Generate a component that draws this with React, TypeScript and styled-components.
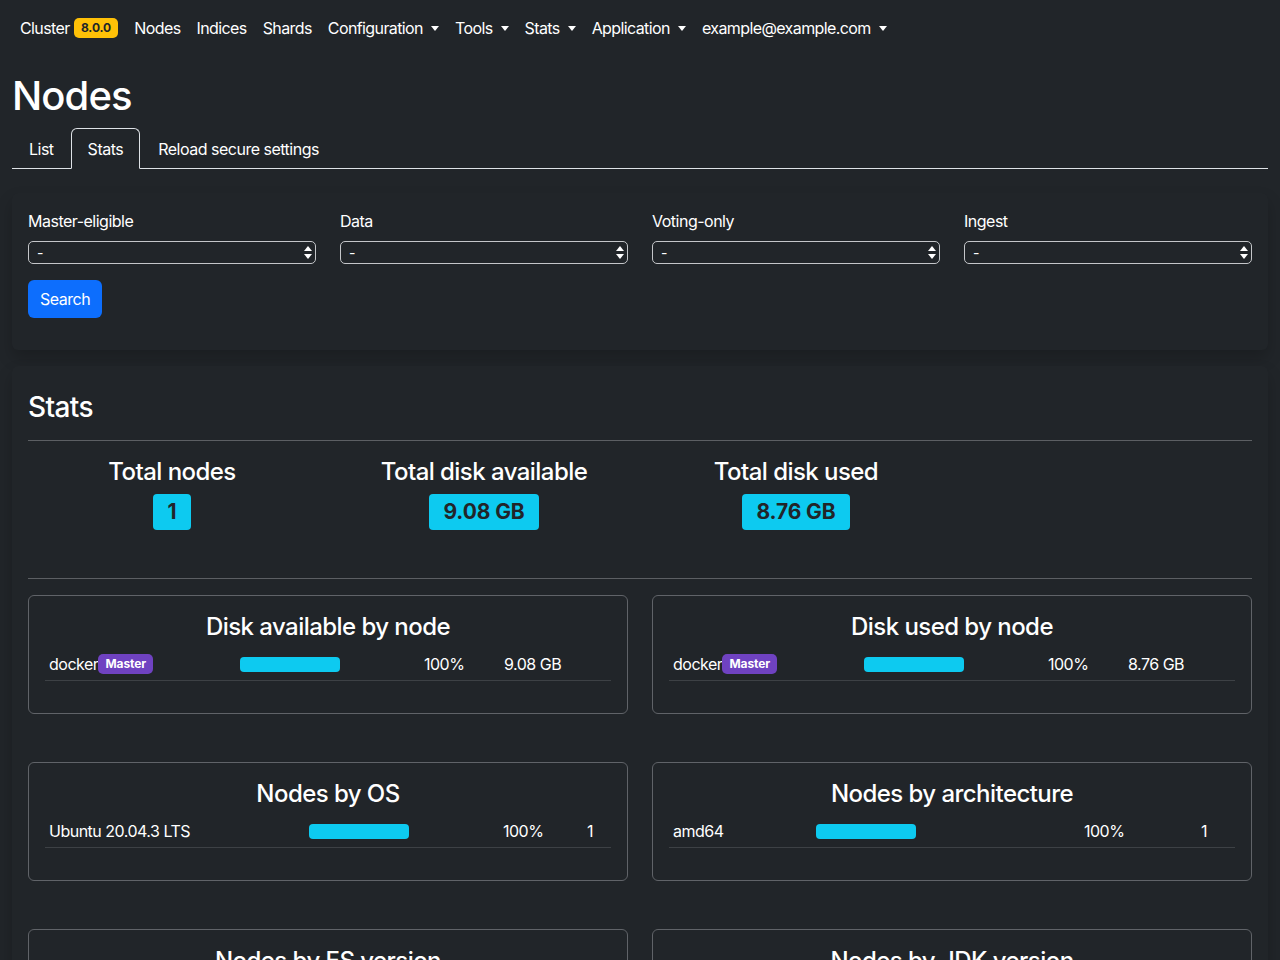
import React from "react";
import styled, { createGlobalStyle } from "styled-components";

const GlobalStyle = createGlobalStyle`
  * { box-sizing: border-box; }
  html, body {
    margin: 0;
    background: #212529;
    color: #dee2e6;
    font-family: Inter, "Noto Sans", "Liberation Sans", sans-serif;
    font-size: 16px;
    line-height: 1.5;
  }
`;

const Navbar = styled.nav`
  height: 56px;
  display: flex;
  align-items: center;
  padding: 0 20px;
  background: #212529;
  color: #fff;
  gap: 16px;
  letter-spacing: -0.6px;
`;

const Brand = styled.div`
  display: flex;
  align-items: center;
  gap: 4px;
  color: #fff;
`;

const Badge = styled.span<{ $bg: string; $fg?: string; $size?: number }>`
  display: inline-block;
  background: ${({ $bg }) => $bg};
  color: ${({ $fg }) => $fg || "#fff"};
  font-size: ${({ $size }) => $size || 12}px;
  font-weight: 700;
  line-height: 1;
  padding: ${({ $size }) => (($size || 12) > 14 ? "0.35em 0.7em" : "0.35em 0.6em")};
  border-radius: ${({ $size }) => (($size || 12) > 14 ? 4 : 5)}px;
  letter-spacing: -0.1px;
`;

const NavLink = styled.span`
  display: inline-flex;
  align-items: center;
  color: #fff;
`;

const Caret = styled.span`
  display: inline-block;
  margin-left: 8px;
  border-top: 5px solid #fff;
  border-left: 4.5px solid transparent;
  border-right: 4.5px solid transparent;
`;

const Main = styled.main`
  padding: 16px 12px 0;
`;

const PageTitle = styled.h1`
  margin: 0 0 8px;
  font-size: 40px;
  line-height: 48px;
  font-weight: 500;
  color: #fff;
  letter-spacing: -0.9px;
`;

const Tabs = styled.div`
  display: flex;
  border-bottom: 1px solid #dee2e6;
  height: 41px;
`;

const Tab = styled.div<{ $active?: boolean }>`
  padding: 8px 16px;
  line-height: 24px;
  height: 41px;
  color: #fff;
  border: 1px solid ${({ $active }) => ($active ? "#dee2e6" : "transparent")};
  border-bottom: 1px solid ${({ $active }) => ($active ? "#212529" : "transparent")};
  border-top-left-radius: 6px;
  border-top-right-radius: 6px;
  background: ${({ $active }) => ($active ? "#212529" : "transparent")};
  margin-right: ${({ $active }) => ($active ? "1px" : "0")};
  letter-spacing: -0.5px;
`;

const Card = styled.section<{ $top: number }>`
  margin-top: ${({ $top }) => $top}px;
  padding: 16px;
  border-radius: 6px;
  background: #212529;
  box-shadow: 0 0.5rem 1rem rgba(0, 0, 0, 0.2);
`;

const FilterGrid = styled.div`
  display: grid;
  grid-template-columns: repeat(4, 1fr);
  column-gap: 24px;
`;

const Field = styled.div`
  display: flex;
  flex-direction: column;
`;

const Label = styled.label`
  display: block;
  height: 24px;
  line-height: 24px;
  margin-bottom: 8px;
  color: #fff;
  letter-spacing: -0.5px;
`;

const SelectWrap = styled.div`
  position: relative;
  height: 23px;
`;

const Select = styled.select`
  appearance: none;
  display: block;
  width: 100%;
  height: 23px;
  background: #212529;
  color: #fff;
  border: 1px solid #c4c6c9;
  border-radius: 5px;
  padding: 0 8px;
  font-family: inherit;
  font-size: 14px;
`;

const SelectArrows = styled.svg`
  position: absolute;
  right: 4px;
  top: 5px;
  pointer-events: none;
`;

const SearchButton = styled.button`
  display: block;
  margin: 16px 0 16px;
  height: 38px;
  padding: 0 12px;
  background: #0d6efd;
  color: #fff;
  border: none;
  border-radius: 6px;
  font-family: inherit;
  font-size: 16px;
  letter-spacing: -0.5px;
`;

const SectionTitle = styled.h3`
  margin: 0 0 15px;
  padding-top: 8px;
  font-size: 28px;
  line-height: 34px;
  font-weight: 500;
  color: #fff;
  letter-spacing: -0.6px;
`;

const Rule = styled.hr`
  margin: 16px 0;
  border: none;
  border-top: 1px solid #5c5f63;
`;

const StatGrid = styled.div`
  display: grid;
  grid-template-columns: repeat(4, 1fr);
  margin: 0 -12px;
`;

const Stat = styled.div`
  display: flex;
  flex-direction: column;
  align-items: center;
  height: 105px;
`;

const StatLabel = styled.h4`
  margin: 0 0 8px;
  font-size: 24px;
  line-height: 29px;
  font-weight: 500;
  color: #fff;
  letter-spacing: -0.55px;
`;

const ChartGrid = styled.div`
  display: grid;
  grid-template-columns: 1fr 1fr;
  column-gap: 24px;
  row-gap: 48px;
`;

const ChartCard = styled.div`
  border: 1px solid #606368;
  border-radius: 6px;
  padding: 16px;
`;

const ChartTitle = styled.h4`
  margin: 0 0 7px;
  text-align: center;
  font-size: 24px;
  line-height: 29px;
  font-weight: 500;
  color: #fff;
  letter-spacing: -0.55px;
`;

const Table = styled.div`
  margin-bottom: 16px;
`;

const Row = styled.div<{ $cols: string }>`
  display: grid;
  grid-template-columns: ${({ $cols }) => $cols};
  align-items: center;
  border-bottom: 1px solid #3d4145;
  height: 33px;
`;

const Cell = styled.div`
  padding: 0 4px;
  display: flex;
  align-items: center;
  color: #fff;
  letter-spacing: -0.5px;
  white-space: nowrap;
`;

const Bar = styled.div`
  height: 15px;
  background: #0dcaf0;
  border-radius: 4px;
`;

type ChartRow = { name: string; master?: boolean; pct: number; value: string };
type Chart = { title: string; cols: string; rows: ChartRow[] };

const charts: Chart[] = [
  {
    title: "Disk available by node",
    cols: "191px 184px 80px 1fr",
    rows: [{ name: "docker", master: true, pct: 100, value: "9.08 GB" }],
  },
  {
    title: "Disk used by node",
    cols: "191px 184px 80px 1fr",
    rows: [{ name: "docker", master: true, pct: 100, value: "8.76 GB" }],
  },
  {
    title: "Nodes by OS",
    cols: "260px 194px 84px 1fr",
    rows: [{ name: "Ubuntu 20.04.3 LTS", pct: 100, value: "1" }],
  },
  {
    title: "Nodes by architecture",
    cols: "143px 268px 117px 1fr",
    rows: [{ name: "amd64", pct: 100, value: "1" }],
  },
  {
    title: "Nodes by ES version",
    cols: "200px 200px 90px 1fr",
    rows: [{ name: "8.0.0", pct: 100, value: "1" }],
  },
  {
    title: "Nodes by JDK version",
    cols: "200px 200px 90px 1fr",
    rows: [{ name: "17.0.1", pct: 100, value: "1" }],
  },
];

const stats = [
  { label: "Total nodes", value: "1" },
  { label: "Total disk available", value: "9.08 GB" },
  { label: "Total disk used", value: "8.76 GB" },
];

const filters = ["Master-eligible", "Data", "Voting-only", "Ingest"];

const navItems: { label: string; menu?: boolean }[] = [
  { label: "Nodes" },
  { label: "Indices" },
  { label: "Shards" },
  { label: "Configuration", menu: true },
  { label: "Tools", menu: true },
  { label: "Stats", menu: true },
  { label: "Application", menu: true },
  { label: "example@example.com", menu: true },
];

export default function App() {
  return (
    <>
      <GlobalStyle />
      <Navbar>
        <Brand>
          Cluster <Badge $bg="#ffc107" $fg="#212529">8.0.0</Badge>
        </Brand>
        {navItems.map((item) => (
          <NavLink key={item.label}>
            {item.label}
            {item.menu && <Caret />}
          </NavLink>
        ))}
      </Navbar>
      <Main>
        <PageTitle>Nodes</PageTitle>
        <Tabs>
          <Tab>List</Tab>
          <Tab $active>Stats</Tab>
          <Tab>Reload secure settings</Tab>
        </Tabs>

        <Card $top={24}>
          <FilterGrid>
            {filters.map((f) => (
              <Field key={f}>
                <Label>{f}</Label>
                <SelectWrap>
                  <Select defaultValue="-">
                    <option>-</option>
                  </Select>
                  <SelectArrows width="8" height="13" viewBox="0 0 8 13">
                    <path d="M4 0 L8 5 L0 5 Z" fill="#fff" />
                    <path d="M0 8 L8 8 L4 13 Z" fill="#fff" />
                  </SelectArrows>
                </SelectWrap>
              </Field>
            ))}
          </FilterGrid>
          <SearchButton>Search</SearchButton>
        </Card>

        <Card $top={16}>
          <SectionTitle>Stats</SectionTitle>
          <Rule />
          <StatGrid>
            {stats.map((s) => (
              <Stat key={s.label}>
                <StatLabel>{s.label}</StatLabel>
                <Badge $bg="#0dcaf0" $fg="#212529" $size={21}>
                  {s.value}
                </Badge>
              </Stat>
            ))}
          </StatGrid>
          <Rule />
          <ChartGrid>
            {charts.map((c) => (
              <ChartCard key={c.title}>
                <ChartTitle>{c.title}</ChartTitle>
                <Table>
                  {c.rows.map((r) => (
                    <Row key={r.name} $cols={c.cols}>
                      <Cell>
                        {r.name}
                        {r.master && <Badge $bg="#6f42c1">Master</Badge>}
                      </Cell>
                      <Cell>
                        <Bar style={{ width: r.pct }} />
                      </Cell>
                      <Cell>{r.pct}%</Cell>
                      <Cell>{r.value}</Cell>
                    </Row>
                  ))}
                </Table>
              </ChartCard>
            ))}
          </ChartGrid>
        </Card>
      </Main>
    </>
  );
}
